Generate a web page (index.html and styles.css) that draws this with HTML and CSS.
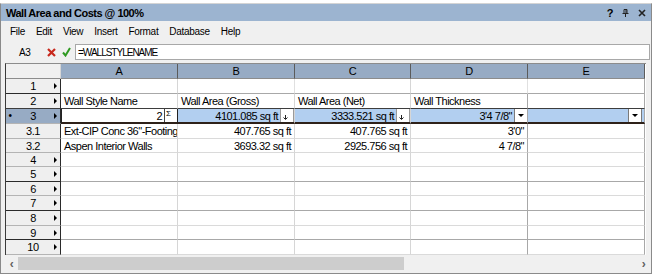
FILE: index.html
```html
<!DOCTYPE html>
<html lang="en">
<head>
    <meta charset="UTF-8">
    <title>Wall Area and Costs @ 100%</title>
    <link rel="stylesheet" href="styles.css">
</head>
<body>
    <div class="window">
        <div class="titlebar">
            <span class="title">Wall Area and Costs @ 100%</span>
            <div class="title-buttons">
                <span class="help">?</span>
                <svg class="pin" width="7" height="8" viewBox="0 0 7 8">
                    <path d="M2 0.5h3v4M2 0.5v4M0.5 4.5h6M3.5 4.5v3.5" stroke="#222" stroke-width="1" fill="none"/>
                    <path d="M4 1v3.5" stroke="#222" stroke-width="1"/>
                </svg>
                <svg class="close" width="8" height="8" viewBox="0 0 8 8">
                    <path d="M1 1l6 6M7 1l-6 6" stroke="#222" stroke-width="1.6"/>
                </svg>
            </div>
        </div>

        <div class="menubar">
            <span>File</span>
            <span>Edit</span>
            <span>View</span>
            <span>Insert</span>
            <span>Format</span>
            <span>Database</span>
            <span>Help</span>
        </div>

        <div class="formulabar">
            <span class="cellref">A3</span>
            <svg class="cancel" width="9" height="9" viewBox="0 0 9 9">
                <path d="M1 1l7 7M8 1l-7 7" stroke="#c8281c" stroke-width="2.2"/>
            </svg>
            <svg class="accept" width="9" height="10" viewBox="0 0 9 10">
                <path d="M1 5.5l2.5 3L8 1" stroke="#2f9a22" stroke-width="2" fill="none"/>
            </svg>
            <div class="formula">=WALLSTYLENAME</div>
        </div>

        <div class="sheet">
            <div class="grid">
                <!-- column headers -->
                <div class="corner"></div>
                <div class="colhead">A</div>
                <div class="colhead">B</div>
                <div class="colhead">C</div>
                <div class="colhead">D</div>
                <div class="colhead">E</div>

                <!-- row 1 -->
                <div class="rowhead dk"><span class="mark"></span><span class="num">1</span><span class="tri"></span></div>
                <div class="cell dk"></div><div class="cell lt dk"></div><div class="cell dk"></div><div class="cell lt dk"></div><div class="cell dk"></div>

                <!-- row 2 -->
                <div class="rowhead sel-top"><span class="mark"></span><span class="num">2</span><span class="tri"></span></div>
                <div class="cell sel-top">Wall Style Name</div>
                <div class="cell sel-top">Wall Area (Gross)</div>
                <div class="cell sel-top">Wall Area (Net)</div>
                <div class="cell sel-top">Wall Thickness</div>
                <div class="cell sel-top"></div>

                <!-- row 3 (summary row) -->
                <div class="rowhead active"><span class="mark">&bull;</span><span class="num">3</span><span class="tri"></span></div>
                <div class="cell summary current">
                    <span class="val">2</span><span class="sigma">&Sigma;</span>
                </div>
                <div class="cell summary">
                    <span class="val">4101.085 sq ft</span>
                    <span class="down"><svg width="5" height="5" viewBox="0 0 5 5"><path d="M2.5 0v4M0.5 2.5l2 2 2-2" stroke="#222" stroke-width="1" fill="none"/></svg></span>
                </div>
                <div class="cell summary">
                    <span class="val">3333.521 sq ft</span>
                    <span class="down"><svg width="5" height="5" viewBox="0 0 5 5"><path d="M2.5 0v4M0.5 2.5l2 2 2-2" stroke="#222" stroke-width="1" fill="none"/></svg></span>
                </div>
                <div class="cell summary">
                    <span class="val">3'4 7/8"</span>
                    <span class="drop"></span>
                </div>
                <div class="cell summary last">
                    <span class="val"></span>
                    <span class="drop"></span>
                </div>

                <!-- row 3.1 -->
                <div class="rowhead sub"><span class="num">3.1</span></div>
                <div class="cell">Ext-CIP Conc 36"-Footing</div>
                <div class="cell num">407.765 sq ft</div>
                <div class="cell num">407.765 sq ft</div>
                <div class="cell num">3'0"</div>
                <div class="cell"></div>

                <!-- row 3.2 -->
                <div class="rowhead sub"><span class="num">3.2</span></div>
                <div class="cell">Aspen Interior Walls</div>
                <div class="cell num">3693.32 sq ft</div>
                <div class="cell num">2925.756 sq ft</div>
                <div class="cell num">4 7/8"</div>
                <div class="cell"></div>

                <!-- rows 4 - 10 -->
                <div class="rowhead"><span class="mark"></span><span class="num">4</span><span class="tri"></span></div>
                <div class="cell"></div><div class="cell"></div><div class="cell"></div><div class="cell"></div><div class="cell"></div>

                <div class="rowhead dk"><span class="mark"></span><span class="num">5</span><span class="tri"></span></div>
                <div class="cell dk"></div><div class="cell dk"></div><div class="cell dk"></div><div class="cell dk"></div><div class="cell dk"></div>

                <div class="rowhead"><span class="mark"></span><span class="num">6</span><span class="tri"></span></div>
                <div class="cell"></div><div class="cell"></div><div class="cell"></div><div class="cell"></div><div class="cell"></div>

                <div class="rowhead dk"><span class="mark"></span><span class="num">7</span><span class="tri"></span></div>
                <div class="cell dk"></div><div class="cell dk"></div><div class="cell dk"></div><div class="cell dk"></div><div class="cell dk"></div>

                <div class="rowhead"><span class="mark"></span><span class="num">8</span><span class="tri"></span></div>
                <div class="cell"></div><div class="cell"></div><div class="cell"></div><div class="cell"></div><div class="cell"></div>

                <div class="rowhead dk"><span class="mark"></span><span class="num">9</span><span class="tri"></span></div>
                <div class="cell dk"></div><div class="cell dk"></div><div class="cell dk"></div><div class="cell dk"></div><div class="cell dk"></div>

                <div class="rowhead"><span class="mark"></span><span class="num">10</span><span class="tri"></span></div>
                <div class="cell"></div><div class="cell"></div><div class="cell"></div><div class="cell"></div><div class="cell"></div>
            </div>
        </div>

        <div class="hscroll">
            <span class="arrow">&lsaquo;</span>
            <div class="track"><div class="thumb"></div></div>
            <span class="arrow">&rsaquo;</span>
        </div>
    </div>
</body>
</html>
```

FILE: styles.css
```css
body {
    margin: 0;
    background-color: #ffffff;
    font-family: "Liberation Sans", Arial, sans-serif;
    font-size: 11px;
    letter-spacing: -0.4px;
    color: #000;
}

.window {
    margin-top: 3px;
    width: 652px;
    height: 271px;
    box-sizing: border-box;
    border: 1px solid #8a8a8a;
    border-top-color: #d4d4d4;
    background-color: #f0f0f0;
    display: flex;
    flex-direction: column;
}

/* title bar */
.titlebar {
    height: 17px;
    background-color: #9cb4d0;
    display: flex;
    align-items: center;
    padding-left: 5px;
}

.title {
    font-weight: bold;
    font-size: 11px;
    letter-spacing: -0.5px;
    flex: 1;
}

.title-buttons {
    display: flex;
    align-items: center;
    gap: 9px;
    padding-right: 5px;
}

.help {
    font-weight: bold;
    font-size: 11px;
}

/* menu */
.menubar {
    height: 21px;
    display: flex;
    align-items: center;
    gap: 11px;
    padding-left: 9px;
    font-size: 10px;
    letter-spacing: -0.3px;
}

/* formula bar */
.formulabar {
    height: 20px;
    display: flex;
    align-items: center;
    padding-right: 1px;
}

.cellref {
    width: 40px;
    padding-left: 18px;
    box-sizing: border-box;
    font-size: 10px;
}

.cancel {
    margin-left: 6px;
}

.accept {
    margin-left: 6px;
}

.formula {
    flex: 1;
    margin-left: 4px;
    height: 16px;
    line-height: 15px;
    background-color: #fff;
    border: 1px solid #a8a8a8;
    box-sizing: border-box;
    padding-left: 2px;
    font-size: 10px;
    letter-spacing: -1px;
}

/* sheet */
.sheet {
    flex: 1;
    padding: 1px 0 0 4px;
}

.grid {
    display: grid;
    grid-template-columns: 55px 117px 117px 116px 117px 117px;
    grid-template-rows: 15px 15px 15px 15px 15px 14px 14px 15px 14px 15px 15px 14px 15px;
    border-top: 1px solid #8c8c8c;
    border-left: 1px solid #3a3a3a;
    width: 640px;
    background-color: #fff;
}

.grid > div {
    box-sizing: border-box;
    border-right: 1px solid #d6d6d6;
    border-bottom: 1px solid #dadada;
    line-height: 14px;
    white-space: nowrap;
    overflow: hidden;
}

.corner {
    background-color: #f0f0f0;
    border-bottom-color: #8c8c8c !important;
}

.colhead {
    background-color: #97abc4;
    text-align: center;
    border-right-color: #5b5b5b !important;
    border-bottom-color: #8c8c8c !important;
}

.rowhead {
    background-color: #efefef;
    display: flex;
    align-items: center;
    padding-right: 3px;
    border-right-color: #2a2a2a !important;
    border-bottom-color: #b4b4b4 !important;
}

.rowhead.dk {
    border-bottom-color: #2a2a2a !important;
}

.rowhead .mark {
    width: 6px;
    text-align: center;
    font-size: 10px;
}

.rowhead .num {
    flex: 1;
    text-align: center;
}

.rowhead .tri {
    width: 0;
    height: 0;
    border-left: 3px solid #000;
    border-top: 3px solid transparent;
    border-bottom: 3px solid transparent;
}

.rowhead.sub {
    padding: 0;
}

.rowhead.active {
    background-color: #97abc4;
}

.rowhead.active .mark {
    width: 8px;
    margin-right: -2px;
}

.cell {
    padding: 0 2px 0 3px;
    letter-spacing: -0.5px;
}

.cell.num {
    text-align: right;
    padding-right: 3px;
}

.cell.dk {
    border-bottom-color: #a8a8a8 !important;
}

.cell.lt {
    border-right-color: #e0e0e0 !important;
}

.grid > div:nth-child(6n+5),
.grid > div:nth-child(6n) {
    border-right-color: #a8a8a8;
}

.sel-top {
    border-bottom-color: #3d3d3d !important;
}

/* summary row */
.summary {
    background-color: #b2cff0;
    display: flex;
    align-items: stretch;
    padding-right: 0;
    border-bottom: 2px solid #2e2119 !important;
}

.summary .val {
    flex: 1;
    text-align: right;
    padding-right: 2px;
}

.summary.current {
    background-color: #fff;
    border: 1px solid #222 !important;
    border-bottom: 2px solid #2e2119 !important;
    border-top: none !important;
}

.sigma {
    width: 13px;
    border-left: 1px solid #444;
    font-size: 8px;
    line-height: 9px;
    padding-left: 1px;
    box-sizing: border-box;
}

.down {
    width: 14px;
    background-color: #fff;
    border: 1px solid #9a9a9a;
    border-top: none;
    border-bottom: none;
    display: flex;
    align-items: flex-end;
    padding: 0 0 2px 2px;
    box-sizing: border-box;
}

.drop {
    width: 12px;
    background-color: #fff;
    border-left: 1px solid #7a7a7a;
    position: relative;
}

.drop::after {
    content: "";
    position: absolute;
    left: 3px;
    top: 5px;
    border-top: 3px solid #000;
    border-left: 3px solid transparent;
    border-right: 3px solid transparent;
}

.summary.last {
    padding-right: 2px;
}

.summary.last .drop {
    border-right: 1px solid #7a7a7a;
}

/* horizontal scrollbar */
.hscroll {
    height: 15px;
    margin: 1px 1px 2px 4px;
    display: flex;
    align-items: center;
    background-color: #f0f0f0;
}

.arrow {
    width: 13px;
    text-align: center;
    color: #606060;
    font-size: 12px;
    font-weight: bold;
}

.track {
    flex: 1;
    height: 13px;
}

.thumb {
    width: 386px;
    height: 100%;
    background-color: #cdcdcd;
}
```
